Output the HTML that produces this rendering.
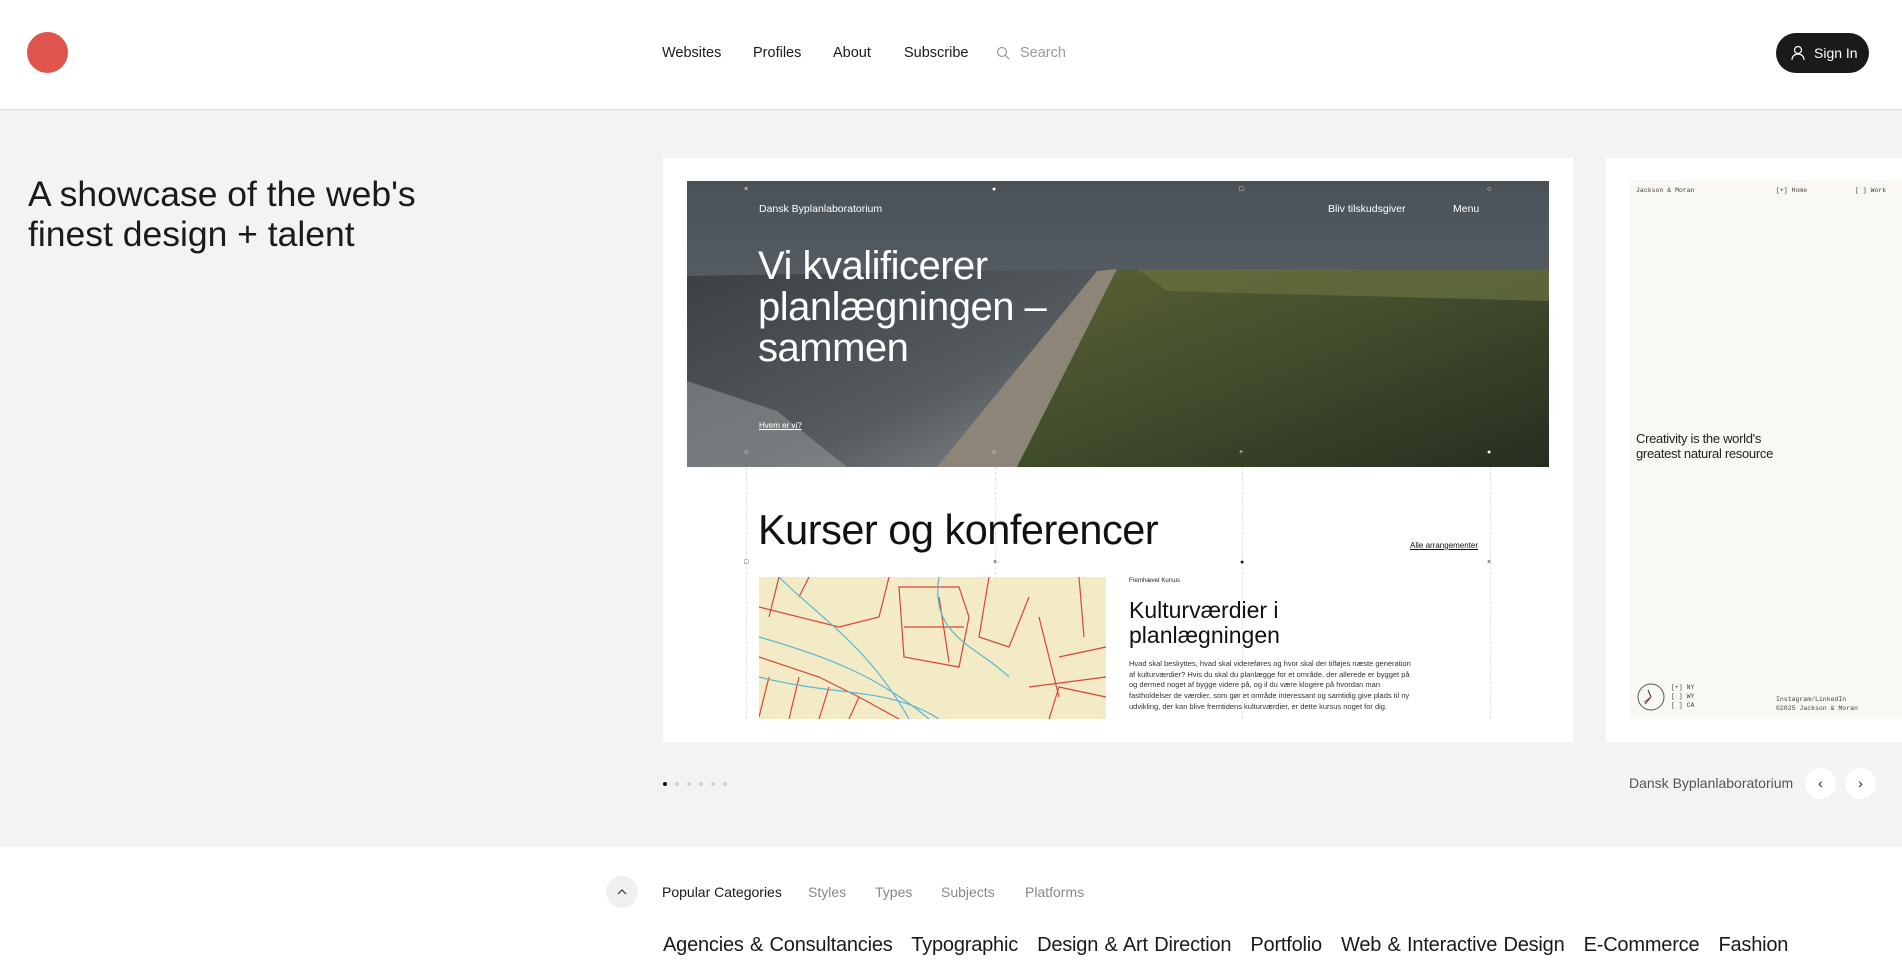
<!DOCTYPE html>
<html><head><meta charset="utf-8">
<style>
*{margin:0;padding:0;box-sizing:border-box}
body{width:1902px;height:967px;overflow:hidden;background:#fff;font-family:"Liberation Sans",sans-serif;color:#1a1a1a;position:relative}
.a{position:absolute;white-space:nowrap}
header{position:absolute;left:0;top:0;width:1902px;height:110px;background:#fff;border-bottom:1px solid #ddd}
.nav{font-size:14.5px;top:45px;color:#1a1a1a}
.gray{position:absolute;left:0;top:110px;width:1902px;height:737px;background:#f3f3f3}
.mono{font-family:"Liberation Mono",monospace;font-size:6.5px;color:#444}
.mk{position:absolute;font-size:7px;color:#fff}
.dl{position:absolute;top:467px;height:252px;border-left:1px dashed #e2e2e2}
</style></head><body>
<header>
<div class="a" style="left:27px;top:32px;width:41px;height:41px;border-radius:50%;background:#e0554b"></div>
<div class="a nav" style="left:662px">Websites</div>
<div class="a nav" style="left:753px">Profiles</div>
<div class="a nav" style="left:833px">About</div>
<div class="a nav" style="left:904px">Subscribe</div>
<svg class="a" style="left:996px;top:46px" width="14" height="14" viewBox="0 0 14 14"><circle cx="6" cy="6" r="4.5" fill="none" stroke="#999" stroke-width="1.2"/><path d="M9.3 9.3L13 13" stroke="#999" stroke-width="1.2"/></svg>
<div class="a nav" style="left:1020px;color:#999">Search</div>
<div class="a" style="left:1776px;top:33px;width:93px;height:40px;border-radius:20px;background:#1a1a1a;color:#fff;font-size:14px;line-height:40px;padding-left:38px">Sign In</div>
<svg class="a" style="left:1791px;top:45px" width="14" height="16" viewBox="0 0 14 16"><circle cx="7" cy="5" r="3.5" fill="none" stroke="#fff" stroke-width="1.2"/><path d="M1 15c0-4 3-6 6-6s6 2 6 6" fill="none" stroke="#fff" stroke-width="1.2"/></svg>
</header>
<div class="gray"></div>
<div class="a" style="left:28px;top:174px;font-size:35.5px;line-height:40px;color:#1a1a1a">A showcase of the web's<br>finest design + talent</div>

<!-- card 1 -->
<div class="a" style="left:663px;top:158px;width:910px;height:584px;background:#fff"></div>
<svg class="a" style="left:687px;top:181px" width="862" height="286" viewBox="0 0 862 286">
<defs>
<linearGradient id="sky" x1="0" y1="0" x2="0" y2="1"><stop offset="0" stop-color="#4a5258"/><stop offset="1" stop-color="#687075"/></linearGradient>
<linearGradient id="sea" x1="0" y1="0" x2="1" y2="1"><stop offset="0" stop-color="#3a4044"/><stop offset=".6" stop-color="#555b5e"/><stop offset="1" stop-color="#8a8e8e"/></linearGradient>
<linearGradient id="land" x1="0" y1="0" x2="1" y2="1"><stop offset="0" stop-color="#5a6232"/><stop offset=".5" stop-color="#404b2c"/><stop offset="1" stop-color="#262e20"/></linearGradient>
</defs>
<rect width="862" height="286" fill="url(#sky)"/>
<polygon points="0,95 420,88 250,286 0,286" fill="url(#sea)"/>
<polygon points="410,90 430,88 330,286 250,286" fill="#8d8678"/>
<polygon points="430,88 862,88 862,286 330,286" fill="url(#land)"/>
<polygon points="450,88 862,88 862,120 480,110" fill="#6a7040" opacity=".7"/>
<polygon points="0,200 90,230 160,286 0,286" fill="#9a9e9e" opacity=".5"/>
</svg>
<div class="mk" style="left:744px;top:186px">×</div><div class="mk" style="left:992px;top:186px">●</div><div class="mk" style="left:1239px;top:186px">□</div><div class="mk" style="left:1487px;top:186px">○</div>
<div class="a" style="left:759px;top:203px;font-size:10.5px;color:#fff">Dansk Byplanlaboratorium</div>
<div class="a" style="left:1328px;top:203px;font-size:10.5px;color:#fff">Bliv tilskudsgiver</div>
<div class="a" style="left:1453px;top:203px;font-size:10.5px;color:#fff">Menu</div>
<div class="a" style="left:758px;top:246px;font-size:40px;line-height:41px;color:#fff;letter-spacing:-.5px">Vi kvalificerer<br>planlægningen –<br>sammen</div>
<div class="a" style="left:759px;top:421px;font-size:8px;color:#fff;text-decoration:underline">Hvem er vi?</div>
<div class="mk" style="left:744px;top:449px">○</div><div class="mk" style="left:992px;top:449px">○</div><div class="mk" style="left:1239px;top:449px">+</div><div class="mk" style="left:1487px;top:449px">●</div>
<div class="dl" style="left:746px"></div><div class="dl" style="left:995px"></div><div class="dl" style="left:1242px"></div><div class="dl" style="left:1490px"></div>
<div class="a" style="left:758px;top:506px;font-size:41.5px;color:#111;letter-spacing:-.5px">Kurser og konferencer</div>
<div class="a" style="left:1410px;top:541px;font-size:8px;color:#111;text-decoration:underline">Alle arrangementer</div>
<div class="a" style="left:744px;top:559px;font-size:7px">□</div><div class="a" style="left:993px;top:559px;font-size:7px">×</div><div class="a" style="left:1240px;top:559px;font-size:7px">●</div><div class="a" style="left:1487px;top:559px;font-size:7px">×</div>
<svg class="a" style="left:759px;top:577px" width="347" height="142" viewBox="0 0 347 142">
<rect width="347" height="142" fill="#f2ebc5"/>
<g fill="none" stroke="#d9453a" stroke-width="1.2">
<path d="M0 30L80 50 120 40 130 0M20 0L10 40M50 0L40 20M0 80L60 100 100 120 140 142M10 100L0 140M40 100L30 142M70 110L60 142M100 120L90 142"/>
<path d="M140 10L145 80 200 90 210 40 200 10ZM180 20L190 85M145 50L205 50M230 0L220 60 250 70 270 20M280 40L300 120M270 110L347 100M300 80L347 70M320 0L325 60M290 142L300 110 347 120"/>
</g>
<g fill="none" stroke="#5bb8d0" stroke-width="1.2">
<path d="M0 100C80 120 130 110 180 142M0 60C70 80 120 100 170 142M20 0C60 40 110 70 150 142M180 0C170 60 220 70 250 100 280 142M200 30C240 20 250 80 300 90 320 142M260 0C280 40 310 60 347 70"/>
</g>
</svg>
<div class="a" style="left:1129px;top:578px;font-size:6px;color:#222">Fremhævet Kursus</div>
<div class="a" style="left:1129px;top:598px;font-size:23px;line-height:25px;color:#111">Kulturværdier i<br>planlægningen</div>
<div class="a" style="left:1129px;top:659px;font-size:7.5px;line-height:10.7px;color:#333;white-space:normal;width:290px">Hvad skal beskyttes, hvad skal videreføres og hvor skal der tilføjes næste generation af kulturværdier? Hvis du skal du planlægge for et område, der allerede er bygget på og dermed noget af bygge videre på, og il du være klogere på hvordan man fastholdelser de værdier, som gør et område interessant og samtidig give plads til ny udvikling, der kan blive fremtidens kulturværdier, er dette kursus noget for dig.</div>

<!-- card 2 -->
<div class="a" style="left:1606px;top:158px;width:296px;height:584px;background:#fff"></div>
<div class="a" style="left:1630px;top:180px;width:272px;height:539px;background:#f9f8f2"></div>
<div class="a mono" style="left:1636px;top:187px">Jackson &amp; Moran</div>
<div class="a mono" style="left:1776px;top:187px">[+] Home</div>
<div class="a mono" style="left:1855px;top:187px">[ ] Work</div>
<div class="a" style="left:1636px;top:431px;font-size:13px;line-height:15px;color:#222;letter-spacing:-.3px">Creativity is the world's<br>greatest natural resource</div>
<svg class="a" style="left:1636px;top:682px" width="30" height="30"><circle cx="15" cy="15" r="13" fill="none" stroke="#555"/><path d="M15 15L12 8M15 15L9 22" stroke="#333"/><path d="M15 15L8 20" stroke="#c44"/></svg>
<div class="a mono" style="left:1671px;top:683px;line-height:9px">[+] NY<br>[ ] WY<br>[ ] CA</div>
<div class="a mono" style="left:1776px;top:695px;line-height:9px">Instagram/LinkedIn<br>©2025 Jackson &amp; Moran</div>

<!-- dots -->
<div class="a" style="left:663px;top:782px;width:4px;height:4px;border-radius:50%;background:#111"></div>
<div class="a" style="left:675px;top:782px;width:4px;height:4px;border-radius:50%;background:#d4d4d4"></div>
<div class="a" style="left:687px;top:782px;width:4px;height:4px;border-radius:50%;background:#d4d4d4"></div>
<div class="a" style="left:699px;top:782px;width:4px;height:4px;border-radius:50%;background:#d4d4d4"></div>
<div class="a" style="left:711px;top:782px;width:4px;height:4px;border-radius:50%;background:#d4d4d4"></div>
<div class="a" style="left:723px;top:782px;width:4px;height:4px;border-radius:50%;background:#d4d4d4"></div>
<div class="a" style="left:1629px;top:775px;font-size:14px;color:#555">Dansk Byplanlaboratorium</div>
<div class="a" style="left:1805px;top:768px;width:31px;height:31px;border-radius:50%;background:#fff;font-size:14px;text-align:center;line-height:30px;color:#222">‹</div>
<div class="a" style="left:1845px;top:768px;width:31px;height:31px;border-radius:50%;background:#fff;font-size:14px;text-align:center;line-height:30px;color:#222">›</div>

<!-- bottom -->
<div class="a" style="left:606px;top:876px;width:32px;height:32px;border-radius:50%;background:#f0f0f0"></div>
<svg class="a" style="left:617px;top:888px" width="10" height="7"><path d="M1 6L5 2 9 6" fill="none" stroke="#333" stroke-width="1.2"/></svg>
<div class="a" style="left:662px;top:884px;font-size:14px;color:#1a1a1a">Popular Categories</div>
<div class="a" style="left:808px;top:884px;font-size:14px;color:#888">Styles</div>
<div class="a" style="left:875px;top:884px;font-size:14px;color:#888">Types</div>
<div class="a" style="left:941px;top:884px;font-size:14px;color:#888">Subjects</div>
<div class="a" style="left:1025px;top:884px;font-size:14px;color:#888">Platforms</div>
<div class="a" style="left:663px;top:934px;font-size:20px;color:#1a1a1a;letter-spacing:-.2px;word-spacing:1px">Agencies &amp; Consultancies&nbsp;&nbsp; Typographic&nbsp;&nbsp; Design &amp; Art Direction&nbsp;&nbsp; Portfolio&nbsp;&nbsp; Web &amp; Interactive Design&nbsp;&nbsp; E-Commerce&nbsp;&nbsp; Fashion</div>
</body></html>
